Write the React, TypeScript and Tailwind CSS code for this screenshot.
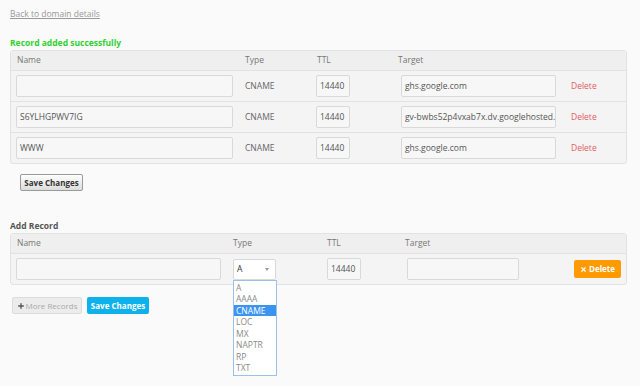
import { Plus, X } from 'lucide-react';

const font = { fontFamily: '"Open Sans", "Liberation Sans", sans-serif' };

const records = [
  { name: '', ttl: '14440', target: 'ghs.google.com' },
  { name: 'S6YLHGPWV7IG', ttl: '14440', target: 'gv-bwbs52p4vxab7x.dv.googlehosted.com' },
  { name: 'WWW', ttl: '14440', target: 'ghs.google.com' },
];

const types = ['A', 'AAAA', 'CNAME', 'LOC', 'MX', 'NAPTR', 'RP', 'TXT'];

const inputCls =
  'h-[22px] rounded-[2px] border border-[#d9d9d9] bg-[#f7f7f7] px-[3px] text-[8.5px] leading-[20px] text-[#555] overflow-hidden whitespace-nowrap';

const App = () => {
  return (
    <div className="min-h-[386px] w-[640px] bg-[#fafafa] px-[10px] pt-[8px] text-[8.5px]" style={font}>
      <a className="block w-fit leading-[12px] text-[#999] underline">Back to domain details</a>

      <div className="mt-[17px] font-bold leading-[12px] text-[#2fd12f]">Record added successfully</div>

      {/* existing records */}
      <div className="mt-[1px] w-[617px] rounded-[3px] border border-[#e2e2e2] bg-[#f4f4f4]">
        <div className="grid h-[20px] grid-cols-[228px_72px_81px_173px_1fr] items-center border-b border-[#e2e2e2] bg-[#efefef] text-[#777]">
          <span className="pl-[6px]">Name</span>
          <span className="pl-[6px]">Type</span>
          <span className="pl-[6px]">TTL</span>
          <span className="pl-[6px]">Target</span>
          <span />
        </div>
        {records.map((r, i) => (
          <div
            key={i}
            className={`grid grid-cols-[228px_72px_81px_173px_1fr] items-center ${i < 2 ? 'h-[31px] border-b border-[#e2e2e2]' : 'h-[30px]'}`}
          >
            <div className="pl-[5px]">
              <div className={`${inputCls} w-[217px] px-[2px]`}>{r.name}</div>
            </div>
            <span className="pl-[6px] text-[#666]">CNAME</span>
            <div className="pl-[5px]">
              <div className={`${inputCls} w-[34px]`}>{r.ttl}</div>
            </div>
            <div className="pl-[9px]">
              <div className={`${inputCls} w-[155px]`}>{r.target}</div>
            </div>
            <span className="pl-[6px] text-[#e0605c]">Delete</span>
          </div>
        ))}
      </div>

      <button className="ml-[10px] mt-[10px] block h-[17px] w-[63px] rounded-[2px] border border-[#9a9a9a] bg-gradient-to-b from-white to-[#dcdcdc] text-[8px] font-bold text-[#333]">
        Save Changes
      </button>

      <div className="mt-[29px] font-bold leading-[12px] text-[#555]">Add Record</div>

      {/* add record */}
      <div className="relative mt-[1px] w-[617px] rounded-[3px] border border-[#e2e2e2] bg-[#f4f4f4]">
        <div className="grid h-[20px] grid-cols-[216px_94px_78px_169px_1fr] items-center border-b border-[#e2e2e2] bg-[#efefef] text-[#777]">
          <span className="pl-[6px]">Name</span>
          <span className="pl-[6px]">Type</span>
          <span className="pl-[6px]">TTL</span>
          <span className="pl-[6px]">Target</span>
          <span />
        </div>
        <div className="grid h-[30px] grid-cols-[216px_94px_78px_169px_1fr] items-center">
          <div className="pl-[5px]">
            <div className={`${inputCls} h-[21px] w-[205px]`} />
          </div>
          <div className="relative pl-[6px]">
            <div className="flex h-[21px] w-[43px] items-center justify-between rounded-[2px] border border-[#d9d9d9] bg-white px-[3px] text-[8.5px] text-[#333]">
              <span>A</span>
              <span className="mr-[3px] h-0 w-0 border-x-[2.5px] border-t-[3px] border-x-transparent border-t-[#999]" />
            </div>
            <ul className="absolute left-[6px] top-[21px] z-10 w-[44px] border border-[#9cc0ea] bg-white py-[1px] text-[8.5px] leading-[11.5px] text-[#8a8a8a]">
              {types.map((t) => (
                <li key={t} className={`pl-[2px] ${t === 'CNAME' ? 'bg-[#3b94f0] text-white' : ''}`}>
                  {t}
                </li>
              ))}
            </ul>
          </div>
          <div className="pl-[6px]">
            <div className={`${inputCls} h-[21px] w-[34px]`}>14440</div>
          </div>
          <div className="pl-[8px]">
            <div className={`${inputCls} h-[21px] w-[112px]`} />
          </div>
          <div className="pl-[6px]">
            <button className="flex h-[18px] w-[47px] items-center justify-center gap-[2px] rounded-[2px] bg-[#ff9a00] text-[8px] font-bold text-white">
              <X className="h-[7px] w-[7px]" strokeWidth={4} />
              Delete
            </button>
          </div>
        </div>
      </div>

      <div className="ml-[2px] mt-[12px] flex gap-[5px]">
        <button className="flex h-[17px] w-[70px] items-center justify-center gap-[1px] rounded-[2px] border border-[#dcdcdc] bg-[#ececec] text-[8px] text-[#aaa]">
          <Plus className="h-[8px] w-[8px] text-[#555]" strokeWidth={4} />
          More Records
        </button>
        <button className="h-[17px] w-[62px] rounded-[2px] bg-[#0db2ec] text-[8px] font-bold text-white">
          Save Changes
        </button>
      </div>
    </div>
  );
};

export default App;
